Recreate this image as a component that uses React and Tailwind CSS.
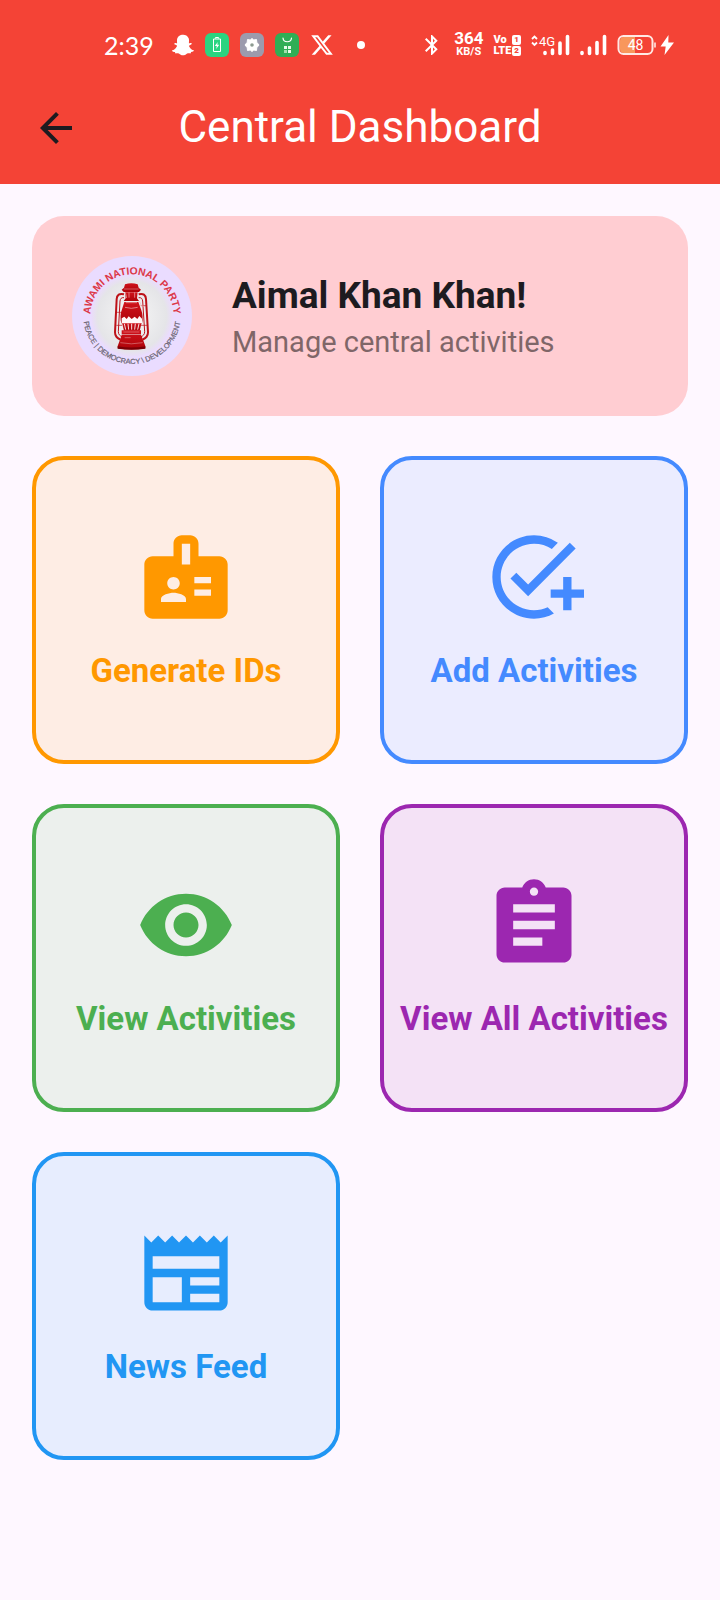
import React from "react";
import {
  MdAddTask,
  MdArrowBack,
  MdAssignment,
  MdBadge,
  MdBluetooth,
  MdNewspaper,
  MdVisibility,
} from "react-icons/md";
import { FaXTwitter } from "react-icons/fa6";
import { FaSnapchatGhost } from "react-icons/fa";

const actions = [
  { label: "Generate IDs", Icon: MdBadge, tone: "border-[#ff9800] bg-[#feede4] text-[#ff9800]" },
  { label: "Add Activities", Icon: MdAddTask, tone: "border-[#448aff] bg-[#ebecff] text-[#448aff]" },
  { label: "View Activities", Icon: MdVisibility, tone: "border-[#4caf50] bg-[#ecf0ed] text-[#4caf50]" },
  { label: "View All Activities", Icon: MdAssignment, tone: "border-[#9c27b0] bg-[#f4e2f6] text-[#9c27b0]" },
  { label: "News Feed", Icon: MdNewspaper, tone: "border-[#2196f3] bg-[#e7edfe] text-[#2196f3]" },
];

function Bars() {
  return (
    <svg viewBox="0 0 27 22" className="h-[22px] w-[27px]" fill="none" stroke="currentColor" strokeWidth="3.6" strokeLinecap="round" aria-hidden="true">
      <path d="M2 18.500v1M9.500 14v5.500M17 8.500v11M24.500 2.500v17" />
    </svg>
  );
}

function BatteryApp() {
  return (
    <svg viewBox="0 0 24 24" className="size-6" aria-hidden="true">
      <rect width="24" height="24" rx="6" fill="#2bd480" />
      <path d="M10.500 5.500v-1h3v1M8.500 6h7v12.500h-7z" fill="none" stroke="#fff" strokeWidth="1" strokeLinejoin="round" />
      <path d="M12.800 9l-3 4h2l-.6 3 3-4.200h-2z" fill="#fff" />
    </svg>
  );
}

function GearApp() {
  return (
    <svg viewBox="0 0 24 24" className="size-6" aria-hidden="true">
      <rect width="24" height="24" rx="6" fill="#9c9bad" />
      <path
        d="M12 5.500l1.800 1.500 2.700-.5.300 2.800 2.200 2.700-2.200 2.700-.3 2.800-2.700-.5-1.800 1.500-1.800-1.500-2.700.5-.3-2.800L5 12l2.200-2.700.3-2.800 2.700.5z"
        fill="#fff"
        stroke="#fff"
        strokeWidth="1"
        strokeLinejoin="round"
      />
      <circle cx="12" cy="12" r="1.800" fill="#8d9b91" />
    </svg>
  );
}

function StoreApp() {
  return (
    <svg viewBox="0 0 24 24" className="size-6" aria-hidden="true">
      <rect width="24" height="24" rx="6" fill="#2fae55" />
      <path d="M8 5c.5 5 8 5 8.500 0" fill="none" stroke="#fff" strokeWidth="1.200" strokeLinecap="round" />
      <path d="M9 13h3v3H9zM13 13h3v3h-3zM13 17h3v3h-3z" fill="#e6fbe9" />
      <path d="M9 17h3v3H9z" fill="#a2dfae" />
    </svg>
  );
}

function StatusBar() {
  return (
    <div className="flex h-[72px] items-center justify-between pt-[18px] pr-[46px] pl-[104px] text-white">
      <div className="flex items-center gap-[11px]">
        <span className="mr-[7px] font-[Lato,sans-serif] text-[25px] leading-8">2:39</span>
        <FaSnapchatGhost className="size-[22px]" aria-hidden="true" />
        <BatteryApp />
        <GearApp />
        <StoreApp />
        <FaXTwitter className="size-6" aria-hidden="true" />
        <span className="ml-3 size-2 rounded-full bg-white" />
      </div>
      <div className="flex items-center gap-[10px]">
        <MdBluetooth className="size-6" aria-hidden="true" />
        <div className="flex flex-col items-center font-[Roboto,sans-serif] font-bold">
          <span className="text-[17px] leading-[13px]">364</span>
          <span className="text-[11px] leading-[13px]">KB/S</span>
        </div>
        <div className="grid grid-cols-[auto_auto] items-center gap-x-px gap-y-px font-['Liberation_Sans_Narrow',Roboto,sans-serif] text-[11px] leading-[10px] font-black">
          <span>Vo</span>
          <span className="rounded-[2px] bg-white px-[2px] text-[8px] text-[#f44336]">1</span>
          <span>LTE</span>
          <span className="rounded-[2px] bg-white px-[2px] text-[8px] text-[#f44336]">2</span>
        </div>
        <svg viewBox="0 0 39 22" className="h-[22px] w-[39px]" fill="none" stroke="currentColor" aria-hidden="true">
          <path d="M1 5l2.500-2.500L6 5M1 8.500L3.500 11 6 8.500" strokeWidth="1.800" />
          <text x="8" y="12" fill="currentColor" stroke="none" className="font-[Roboto,sans-serif] text-[13px]">4G</text>
          <path d="M14 18.500v1M21.500 16v3.500M29 9v10.500M36.500 2.500v17" strokeWidth="3.600" strokeLinecap="round" />
        </svg>
        <Bars />
        <div className="flex items-center gap-1">
          <svg viewBox="0 0 39 22" className="h-[22px] w-[39px]" aria-hidden="true">
            <path d="M7 3h11v16H7a4 4 0 0 1-4-4V7a4 4 0 0 1 4-4z" fill="#f8975c" />
            <rect x="1.500" y="2" width="34" height="18" rx="5" fill="none" stroke="#ffe9e4" strokeWidth="2" />
            <path d="M38 8.500v5" stroke="#ffe9e4" strokeWidth="1.600" />
            <text x="18.500" y="16" textAnchor="middle" fill="#fff" className="font-[Roboto,sans-serif] text-[14px]">48</text>
          </svg>
          <svg viewBox="0 0 14 22" className="h-[22px] w-[14px]" fill="currentColor" aria-hidden="true">
            <path d="M8.500 1L.5 12.500h5.200L4.500 21 14 8.500H8.300z" />
          </svg>
        </div>
      </div>
    </div>
  );
}

function PartyLogo() {
  return (
    <svg viewBox="0 0 360 360" className="size-[120px] shrink-0" role="img" aria-label="Awami National Party">
      <defs>
        <radialGradient id="disc">
          <stop offset="0" stopColor="#f6f6f6" />
          <stop offset=".85" stopColor="#e5e5e8" />
          <stop offset="1" stopColor="#eadcfb" />
        </radialGradient>
        <linearGradient id="red" x1="0" y1="0" x2="0" y2="1">
          <stop offset="0" stopColor="#d0131b" />
          <stop offset="1" stopColor="#ad0309" />
        </linearGradient>
        <path id="upper" d="M55 180A125 125 0 0 1 305 180" />
        <path id="lower" d="M34 178A146 146 0 0 0 326 178" />
      </defs>
      <circle cx="180" cy="180" r="180" fill="#eadcff" />
      <circle cx="180" cy="180" r="122" fill="url(#disc)" />
      <text fill="#dc3848" textAnchor="middle" className="font-['Liberation_Sans',sans-serif] text-[31px] font-bold">
        <textPath href="#upper" startOffset="50%">AWAMI NATIONAL PARTY</textPath>
      </text>
      <text fill="#6a6472" stroke="#6a6472" strokeWidth="0.6" textAnchor="middle" className="font-['Liberation_Sans',sans-serif] text-[22px]">
        <textPath href="#lower" startOffset="50%">PEACE | DEMOCRACY \ DEVELOPMENT</textPath>
      </text>
      <g transform="translate(-37 -47)">
        <g fill="none" stroke="#bd1219">
          <path d="M193 162c-14-4-21 2-22 14l-5 100c0 12 6 16 16 22M237 162c14-4 21 2 22 14l6 100c0 12-6 16-16 22" strokeWidth="6" />
          <path d="M193 172c-8-1-11 3-12 10l-5 92c0 8 4 12 12 16M237 172c8-1 11 3 12 10l6 92c0 8-4 12-12 16" strokeWidth="3" />
          <path d="M169 216h20M243 196h17M170 255h17M244 255h20" strokeWidth="2" />
        </g>
        <g fill="url(#red)">
          <path d="M196 132q19-7 38 0l3 10 7 6-6 7h-46l-6-7 7-6z" />
          <path d="M196 156h38l-2 18 6 8h-46l6-8z" />
          <path d="M194 185h42l8 22q8 20 3 42h-62q-6-22 2-42z" />
          <path d="M187 247h59l-6 24h-47z" />
          <path d="M186 270h58v12h-58zM186 283h58l4 10 9 24v7q-41 7-83 0v-7l9-24z" />
        </g>
        <path d="M186 249v-15l8-5 7 7 6-8 9 8 9-7 8 7 6-9 8 8v14z" fill="#fff8f8" />
        <path d="M197 156l4 17M208 156v16M225 156v16M198 187h34M196 201q19 6 38 0M240 184l5 12 9 2" fill="none" stroke="#f0b7b9" strokeWidth="2" />
        <path d="M194 250l4 18M205 250l2 18M216 250v18M227 250l-2 18M238 250l-4 18" stroke="#f5dedf" strokeWidth="3" />
        <path d="M193 146h44M191 275h48M182 307q33 7 67 0M195 292h18" fill="none" stroke="#e8a6a9" strokeWidth="1.500" />
        <path d="M174 318q41 7 83 0v7q-41 6-83 0z" fill="#790006" />
      </g>
    </svg>
  );
}

export default function App() {
  return (
    <div className="min-h-screen bg-[#fef7ff] font-[Roboto,sans-serif]">
      <header className="bg-[#f44336]">
        <StatusBar />
        <div className="grid h-28 grid-cols-[48px_1fr_48px] items-center px-8">
          <button type="button" aria-label="Back" className="flex size-12 items-center justify-center text-[#1d1b20]">
            <MdArrowBack className="size-12" />
          </button>
          <h1 className="pb-0.5 text-center text-[44px] leading-14 font-normal text-white">Central Dashboard</h1>
        </div>
      </header>

      <main className="flex flex-col gap-10 p-8">
        <section className="flex items-center gap-10 rounded-[32px] bg-[#ffcdd2] p-10">
          <PartyLogo />
          <div>
            <h2 className="text-[37px] leading-[52px] font-bold text-[#1d1b20]">Aimal Khan Khan!</h2>
            <p className="text-[29px] leading-10 text-[#7f6668]">Manage central activities</p>
          </div>
        </section>

        <div className="grid grid-cols-2 gap-10">
          {actions.map(({ label, Icon, tone }) => (
            <button
              key={label}
              type="button"
              className={`flex aspect-square flex-col items-center justify-center gap-[22px] rounded-[32px] border-4 ${tone}`}
            >
              <Icon className="size-[100px]" aria-hidden="true" />
              <span className="text-[33px] leading-[44px] font-bold whitespace-nowrap">{label}</span>
            </button>
          ))}
        </div>
      </main>
    </div>
  );
}
